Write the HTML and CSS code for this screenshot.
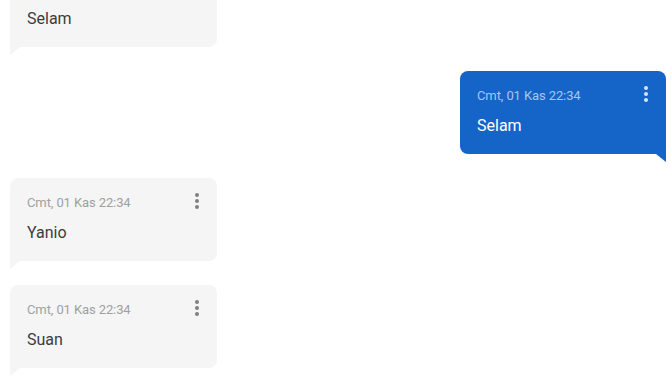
FILE: index.html
```html
<!DOCTYPE html>
<html lang="tr">
<head>
    <meta charset="UTF-8">
    <meta name="viewport" content="width=device-width, initial-scale=1.0">
    <title>Mesajlar</title>
    <link rel="stylesheet" href="styles.css">
</head>
<body>
    <div class="chat">
        <div class="msg in">
            <div class="bubble">
                <div class="meta">
                    <span class="time">Cmt, 01 Kas 22:34</span>
                    <span class="menu"><i></i><i></i><i></i></span>
                </div>
                <div class="text">Selam</div>
            </div>
        </div>

        <div class="msg out">
            <div class="bubble">
                <div class="meta">
                    <span class="time">Cmt, 01 Kas 22:34</span>
                    <span class="menu"><i></i><i></i><i></i></span>
                </div>
                <div class="text">Selam</div>
            </div>
        </div>

        <div class="msg in">
            <div class="bubble">
                <div class="meta">
                    <span class="time">Cmt, 01 Kas 22:34</span>
                    <span class="menu"><i></i><i></i><i></i></span>
                </div>
                <div class="text">Yanio</div>
            </div>
        </div>

        <div class="msg in">
            <div class="bubble">
                <div class="meta">
                    <span class="time">Cmt, 01 Kas 22:34</span>
                    <span class="menu"><i></i><i></i><i></i></span>
                </div>
                <div class="text">Suan</div>
            </div>
        </div>
    </div>
</body>
</html>
```

FILE: styles.css
```css
html, body {
    margin: 0;
    height: 100%;
    overflow: hidden;
    background: #fff;
}
body {
    font-family: Roboto, 'Noto Sans', sans-serif;
}
.chat {
    display: flex;
    flex-direction: column;
    gap: 24px;
    padding: 0 6px 0 10px;
    margin-top: -36px;
}
.msg {
    display: flex;
}
.msg.out {
    justify-content: flex-end;
}
.bubble {
    position: relative;
    width: 207px;
    box-sizing: border-box;
    height: 83px;
    padding: 16px 17px 0;
    border-radius: 8px;
    background: #f5f5f5;
}
.msg.in .bubble {
    border-bottom-left-radius: 0;
}
.msg.out .bubble {
    width: 206px;
    background: #1565c8;
    border-bottom-right-radius: 0;
}
/* tail under the bubble */
.bubble::after {
    content: "";
    position: absolute;
    top: 100%;
    width: 0;
    height: 0;
    border-top: 8px solid #f5f5f5;
}
.msg.in .bubble::after {
    left: 0;
    border-right: 10px solid transparent;
}
.msg.out .bubble::after {
    right: 0;
    border-top-color: #1565c8;
    border-left: 10px solid transparent;
}
.meta {
    display: flex;
    justify-content: space-between;
    align-items: center;
    height: 17px;
}
.time {
    font-size: 13px;
    color: #a0a0a0;
    letter-spacing: -0.1px;
}
.msg.out .time {
    color: #a8c6ee;
}
.menu {
    display: flex;
    flex-direction: column;
    gap: 2px;
    margin-right: 1px;
    margin-top: -4px;
}
.menu i {
    display: block;
    width: 4px;
    height: 4px;
    border-radius: 50%;
    background: #808080;
}
.msg.out .menu i {
    background: #d6e4f7;
}
.text {
    margin-top: 11px;
    font-size: 16px;
    line-height: 22px;
    color: #3c3c3c;
}
.msg.out .text {
    color: #fff;
}
```
